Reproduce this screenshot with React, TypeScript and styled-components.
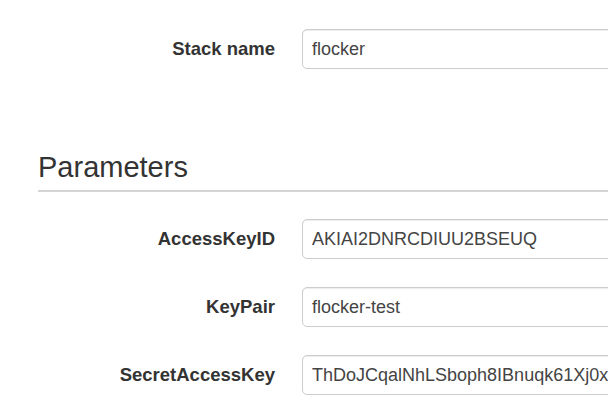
import React from "react";
import styled, { createGlobalStyle } from "styled-components";

const GlobalStyle = createGlobalStyle`
  html, body {
    margin: 0;
    padding: 0;
    background: #fff;
    overflow: hidden;
  }
  body {
    font-family: "Liberation Sans", Arial, sans-serif;
    color: #333;
  }
`;

const Page = styled.div`
  width: 608px;
  height: 420px;
  overflow: hidden;
  padding: 29px 0 0 38px;
  box-sizing: border-box;
`;

const Form = styled.div`
  display: grid;
  grid-template-columns: 237px 400px;
  column-gap: 27px;
  row-gap: 28px;
  align-items: center;
`;

const Label = styled.label`
  text-align: right;
  font-size: 18.5px;
  font-weight: bold;
  color: #333;
`;

const Input = styled.input`
  box-sizing: border-box;
  width: 100%;
  height: 40px;
  padding: 0 9px;
  border: 1px solid #ccc;
  border-radius: 5px;
  box-shadow: inset 0 1px 1px rgba(0, 0, 0, 0.075);
  font-family: "Liberation Sans", Arial, sans-serif;
  font-size: 18px;
  color: #444;
  background: #fff;
  outline: none;
`;

const Heading = styled.h2`
  margin: 82px 0 27px;
  padding: 0 0 7px;
  font-size: 29px;
  line-height: 32px;
  font-weight: normal;
  color: #333;
  border-bottom: 2px solid #d5d5d5;
`;

type Field = { label: string; value: string };

const stackFields: Field[] = [{ label: "Stack name", value: "flocker" }];

const paramFields: Field[] = [
  { label: "AccessKeyID", value: "AKIAI2DNRCDIUU2BSEUQ" },
  { label: "KeyPair", value: "flocker-test" },
  { label: "SecretAccessKey", value: "ThDoJCqalNhLSboph8IBnuqk61Xj0xQ2zYb" },
];

function FieldRows({ fields }: { fields: Field[] }) {
  return (
    <Form>
      {fields.map((f) => (
        <React.Fragment key={f.label}>
          <Label>{f.label}</Label>
          <Input defaultValue={f.value} readOnly />
        </React.Fragment>
      ))}
    </Form>
  );
}

export default function App() {
  return (
    <Page>
      <GlobalStyle />
      <FieldRows fields={stackFields} />
      <Heading>Parameters</Heading>
      <FieldRows fields={paramFields} />
    </Page>
  );
}
